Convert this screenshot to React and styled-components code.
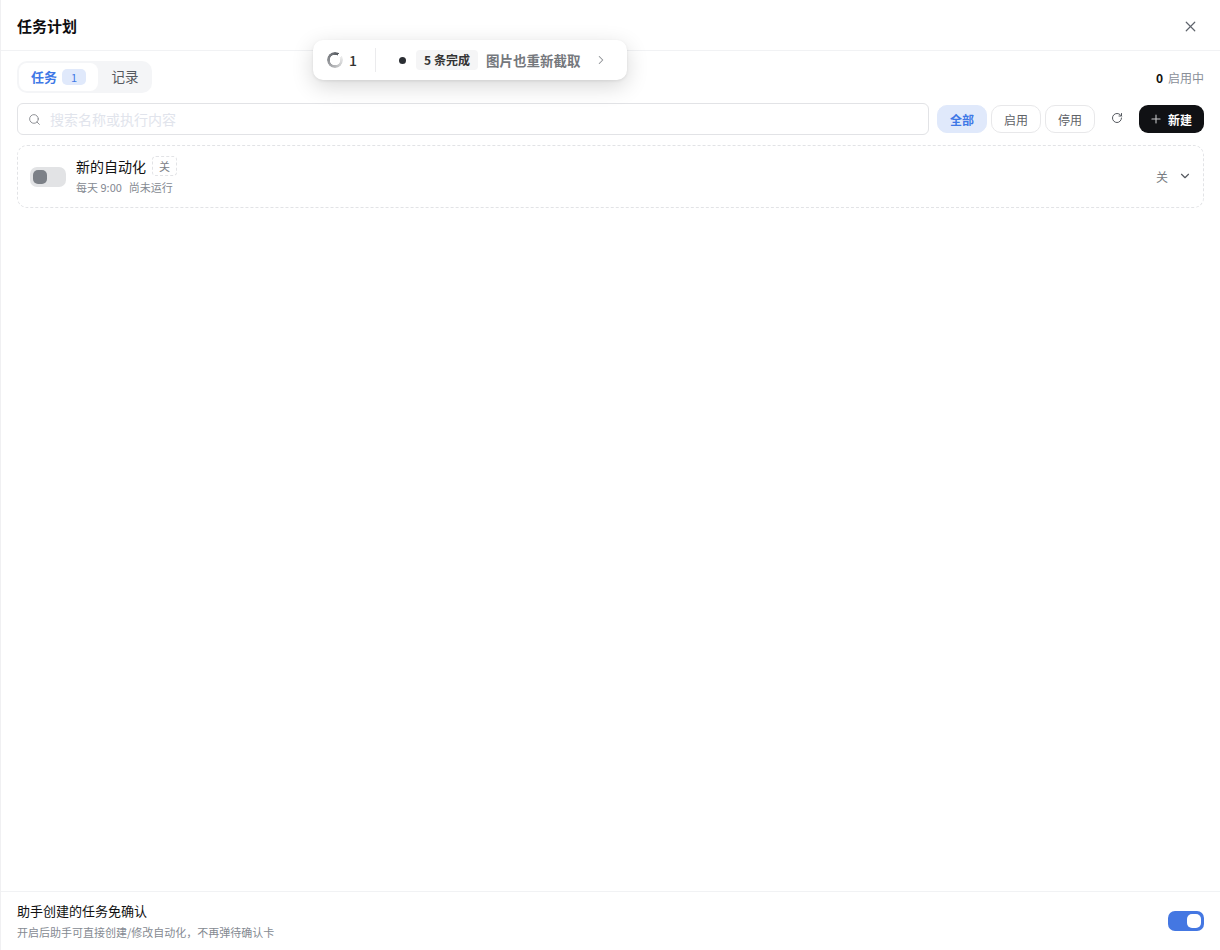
import React from "react";
import styled, { createGlobalStyle } from "styled-components";
import { X, Search, RotateCw, Plus, ChevronDown, ChevronRight } from "lucide-react";

const Global = createGlobalStyle`
  html, body { margin: 0; padding: 0; background: #fff; }
  body { font-family: "Noto Sans CJK SC", sans-serif; color: #111; }
  * { box-sizing: border-box; }
`;

const Panel = styled.div`
  position: relative;
  width: 1220px;
  height: 950px;
  display: flex;
  flex-direction: column;
  background: #fff;
  border-left: 1px solid #f0f0f2;
`;
const Header = styled.header`
  height: 51px;
  flex: none;
  display: flex;
  align-items: center;
  justify-content: space-between;
  padding: 2px 20px 0 16px;
  border-bottom: 1px solid #f1f2f4;
`;
const Title = styled.h1`
  margin: 0;
  font-size: 15px;
  font-weight: 700;
  line-height: 20px;
  color: #0d0d0f;
`;
const CloseBtn = styled.button`
  width: 20px;
  height: 20px;
  padding: 0;
  border: 0;
  background: none;
  color: #5f646c;
  display: flex;
  align-items: center;
  justify-content: center;
`;
const Body = styled.main`
  flex: 1;
  display: flex;
  flex-direction: column;
  padding: 10px 16px 0;
`;
const TabRow = styled.div`
  display: flex;
  align-items: center;
  justify-content: space-between;
  height: 32px;
`;
const Tabs = styled.div`
  display: flex;
  height: 32px;
  width: 135px;
  padding: 2px;
  background: #f4f5f7;
  border-radius: 10px;
`;
const Tab = styled.div`
  display: flex;
  align-items: center;
  justify-content: center;
  gap: 5px;
  height: 28px;
  width: ${p => (p.$active ? "79px" : "52px")};
  padding: ${p => (p.$active ? "0 0 2px" : "0 0 2px 2px")};
  border-radius: 8px;
  font-size: ${p => (p.$active ? "13px" : "13.5px")};
  font-weight: ${p => (p.$active ? 700 : 400)};
  background: ${p => (p.$active ? "#fff" : "transparent")};
  color: ${p => (p.$active ? "#3f78e6" : "#55595f")};
`;
const TabCount = styled.span`
  width: 24px;
  height: 16px;
  margin-top: 2px;
  border-radius: 5px;
  background: #e0e9fb;
  color: #3f78e6;
  font-size: 11px;
  font-weight: 400;
  line-height: 16px;
  text-align: center;
`;
const Stat = styled.div`
  font-size: 12px;
  color: #8a8f98;
  display: flex;
  gap: 5px;
  align-items: baseline;
`;
const StatNum = styled.b`
  color: #111;
  font-weight: 700;
`;
const Toolbar = styled.div`
  display: flex;
  align-items: center;
  margin-top: 10px;
  height: 32px;
`;
const SearchBox = styled.div`
  width: 912px;
  height: 32px;
  display: flex;
  align-items: center;
  gap: 9px;
  padding: 0 10px;
  border: 1px solid #e2e3e6;
  border-radius: 6px;
  color: #7f8288;
`;
const Placeholder = styled.span`
  font-size: 14px;
  line-height: 20px;
  color: #e1e4ec;
`;
const Filters = styled.div`
  display: flex;
  gap: 4px;
  margin-left: 8px;
`;
const FilterBtn = styled.button`
  width: 50px;
  height: 28px;
  padding: 0;
  font-family: inherit;
  font-size: 12px;
  border-radius: 10px;
  border: 1px solid ${p => (p.$active ? "#e0e9fb" : "#e8e8ea")};
  background: ${p => (p.$active ? "#e0e9fb" : "#fff")};
  color: ${p => (p.$active ? "#3f78e6" : "#5f6368")};
  font-weight: ${p => (p.$active ? 700 : 400)};
`;
const RefreshBtn = styled.button`
  width: 20px;
  height: 20px;
  padding: 0 0 2px;
  margin-left: 12px;
  border: 0;
  background: none;
  color: #55595f;
  display: flex;
  align-items: center;
  justify-content: center;
`;
const NewBtn = styled.button`
  width: 65px;
  height: 28px;
  margin-left: 12px;
  padding: 0 2px 0 0;
  border: 0;
  border-radius: 9px;
  background: #101114;
  color: #fff;
  font-family: inherit;
  font-size: 12px;
  font-weight: 700;
  display: flex;
  align-items: center;
  justify-content: center;
  gap: 5px;
  svg { color: #c9cacc; }
`;
const TaskCard = styled.div`
  margin-top: 10px;
  height: 63px;
  display: flex;
  align-items: center;
  padding: 0 11px 0 12px;
  border: 1px dashed #e2e3e6;
  border-radius: 10px;
`;
const Toggle = styled.div`
  flex: none;
  width: 36px;
  height: 20px;
  padding: 2px;
  border-radius: 7px;
  display: flex;
  justify-content: ${p => (p.$on ? "flex-end" : "flex-start")};
  background: ${p => (p.$on ? "#4477e2" : "#e2e3e5")};
`;
const Knob = styled.span`
  width: 14px;
  height: 14px;
  margin: 1px;
  border-radius: 5px;
  background: ${p => (p.$on ? "#fff" : "#7c8087")};
`;
const TaskInfo = styled.div`
  flex: 1;
  margin-left: 10px;
  display: flex;
  flex-direction: column;
`;
const TaskName = styled.div`
  display: flex;
  align-items: center;
  gap: 6px;
  font-size: 14px;
  line-height: 20px;
  margin-top: -2px;
  color: #111;
`;
const DashTag = styled.span`
  width: 25px;
  height: 20px;
  border: 1px dashed #e2e3e6;
  border-radius: 4px;
  font-size: 11px;
  line-height: 18px;
  text-align: center;
  color: #7d8187;
`;
const TaskMeta = styled.div`
  display: flex;
  gap: 7px;
  font-size: 11px;
  line-height: 16px;
  margin-top: 3px;
  color: #858a92;
`;
const TaskEnd = styled.div`
  display: flex;
  align-items: center;
  gap: 10px;
  font-size: 12px;
  color: #777b81;
  svg { color: #55595f; margin-top: -1px; }
`;
const Footer = styled.footer`
  height: 59px;
  flex: none;
  display: flex;
  align-items: center;
  justify-content: space-between;
  padding: 0 16px;
  border-top: 1px solid #f1f2f4;
`;
const FooterTitle = styled.div`
  font-size: 13px;
  line-height: 20px;
  margin-top: -1px;
  color: #111;
`;
const FooterHint = styled.div`
  font-size: 11px;
  line-height: 16px;
  margin-top: 3px;
  color: #858a92;
`;
const Island = styled.div`
  position: absolute;
  left: 312px;
  top: 40px;
  width: 314px;
  height: 40px;
  display: flex;
  align-items: center;
  background: #fff;
  border-radius: 10px;
  box-shadow: 0 6px 22px rgba(0, 0, 0, 0.16), 0 1px 3px rgba(0, 0, 0, 0.08);
  padding-left: 14px;
`;
const Spinner = styled.span`
  width: 16px;
  height: 16px;
  border-radius: 50%;
  background: conic-gradient(from 60deg, #eeeeee, #55595f 92%, transparent 92%);
  -webkit-mask: radial-gradient(circle, transparent 5px, #000 5.5px);
  mask: radial-gradient(circle, transparent 5px, #000 5.5px);
`;
const IslandCount = styled.span`
  margin-left: 6px;
  font-size: 14px;
  font-weight: 500;
  color: #333;
`;
const Sep = styled.span`
  width: 1px;
  height: 24px;
  margin-left: 18px;
  background: #ebebed;
`;
const Dot = styled.span`
  width: 7px;
  height: 7px;
  margin-left: 23px;
  border-radius: 50%;
  background: #2b2e33;
`;
const DoneTag = styled.span`
  margin-left: 10px;
  width: 62px;
  height: 20px;
  border-radius: 4px;
  background: #f5f5f6;
  font-size: 12px;
  font-weight: 700;
  line-height: 20px;
  text-align: center;
  color: #333;
`;
const IslandText = styled.span`
  margin-left: 8px;
  font-size: 13.5px;
  font-weight: 700;
  color: #75787d;
`;
const IslandArrow = styled.span`
  margin-left: 14px;
  display: flex;
  color: #8c8f94;
`;

export default function App() {
  return (
    <Panel>
      <Global />
      <Header>
        <Title>任务计划</Title>
        <CloseBtn><X size={17} strokeWidth={1.7} /></CloseBtn>
      </Header>
      <Body>
        <TabRow>
          <Tabs>
            <Tab $active>任务<TabCount>1</TabCount></Tab>
            <Tab>记录</Tab>
          </Tabs>
          <Stat><StatNum>0</StatNum>启用中</Stat>
        </TabRow>
        <Toolbar>
          <SearchBox>
            <Search size={13} strokeWidth={1.6} />
            <Placeholder>搜索名称或执行内容</Placeholder>
          </SearchBox>
          <Filters>
            <FilterBtn $active>全部</FilterBtn>
            <FilterBtn>启用</FilterBtn>
            <FilterBtn>停用</FilterBtn>
          </Filters>
          <RefreshBtn><RotateCw size={12} strokeWidth={2} /></RefreshBtn>
          <NewBtn><Plus size={14} strokeWidth={1.8} />新建</NewBtn>
        </Toolbar>
        <TaskCard>
          <Toggle><Knob /></Toggle>
          <TaskInfo>
            <TaskName>新的自动化<DashTag>关</DashTag></TaskName>
            <TaskMeta><span>每天 9:00</span><span>尚未运行</span></TaskMeta>
          </TaskInfo>
          <TaskEnd>关<ChevronDown size={14} strokeWidth={2} /></TaskEnd>
        </TaskCard>
      </Body>
      <Footer>
        <div>
          <FooterTitle>助手创建的任务免确认</FooterTitle>
          <FooterHint>开启后助手可直接创建/修改自动化，不再弹待确认卡</FooterHint>
        </div>
        <Toggle $on><Knob $on /></Toggle>
      </Footer>
      <Island>
        <Spinner />
        <IslandCount>1</IslandCount>
        <Sep />
        <Dot />
        <DoneTag>5 条完成</DoneTag>
        <IslandText>图片也重新截取</IslandText>
        <IslandArrow><ChevronRight size={14} strokeWidth={1.8} /></IslandArrow>
      </Island>
    </Panel>
  );
}
